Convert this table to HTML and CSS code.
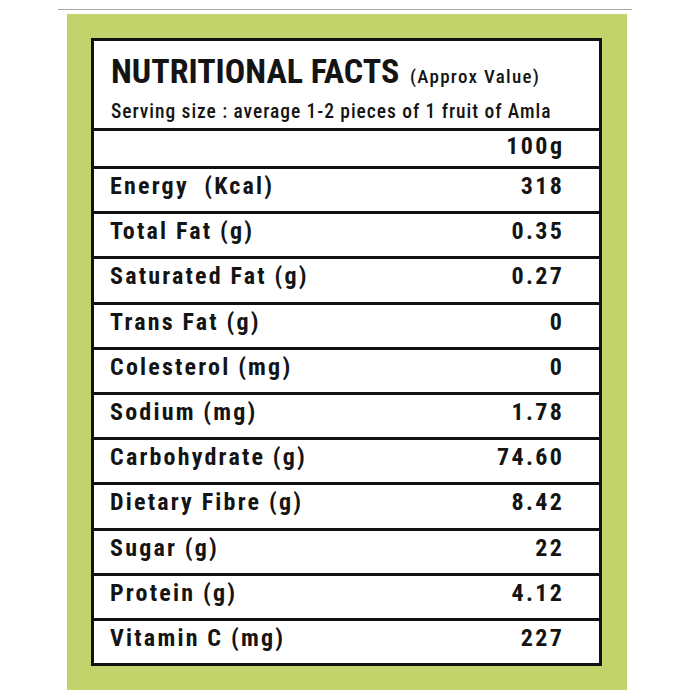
FILE: index.html
```html
<!DOCTYPE html>
<html>
<head>
<meta charset="utf-8">
<link rel="stylesheet" href="styles.css">
</head>
<body>
<div class="page">
  <div class="rule"></div>
  <div class="panel">
    <div class="label-card">
      <div class="head">
        <div class="title"><span class="title-main">NUTRITIONAL FACTS</span> <span class="title-note">(Approx Value)</span></div>
        <div class="serving">Serving size : average 1-2 pieces of 1 fruit of Amla</div>
      </div>
      <div class="row row-unit"><span class="name"></span><span class="val">100g</span></div>
      <div class="row"><span class="name">Energy&nbsp; (Kcal)</span><span class="val">318</span></div>
      <div class="row"><span class="name">Total Fat (g)</span><span class="val">0.35</span></div>
      <div class="row"><span class="name">Saturated Fat (g)</span><span class="val">0.27</span></div>
      <div class="row"><span class="name">Trans Fat (g)</span><span class="val">0</span></div>
      <div class="row"><span class="name">Colesterol (mg)</span><span class="val">0</span></div>
      <div class="row"><span class="name">Sodium (mg)</span><span class="val">1.78</span></div>
      <div class="row"><span class="name">Carbohydrate (g)</span><span class="val">74.60</span></div>
      <div class="row"><span class="name">Dietary Fibre (g)</span><span class="val">8.42</span></div>
      <div class="row"><span class="name">Sugar (g)</span><span class="val">22</span></div>
      <div class="row"><span class="name">Protein (g)</span><span class="val">4.12</span></div>
      <div class="row"><span class="name">Vitamin C (mg)</span><span class="val">227</span></div>
    </div>
  </div>
</div>
</body>
</html>
```

FILE: styles.css
```css
html, body {
  margin: 0;
  padding: 0;
  background: #ffffff;
}

body {
  font-family: Roboto, "Open Sans", sans-serif;
  font-stretch: 75%;
  color: #141414;
}

.page {
  width: 690px;
  height: 700px;
  padding-top: 9px;
  box-sizing: border-box;
}

.rule {
  margin-left: 58px;
  width: 574px;
  height: 1px;
  background: #a9a9a9;
}

.panel {
  margin-top: 4px;
  margin-left: 67px;
  width: 560px;
  height: 676px;
  box-sizing: border-box;
  background: #c3d36b;
  padding: 24px 25px 0 24px;
}

.label-card {
  background: #ffffff;
  border: 3px solid #111111;
  display: flex;
  flex-direction: column;
}

.head {
  height: 87px;
  box-sizing: border-box;
  padding: 13px 0 0 17px;
}

.title {
  line-height: 34px;
  white-space: nowrap;
}

.title-main {
  font-size: 34px;
  font-weight: bold;
}

.title-note {
  font-size: 19px;
  font-weight: 500;
  letter-spacing: 1.3px;
  margin-left: 7px;
}

.serving {
  margin-top: 6px;
  font-size: 19.5px;
  font-weight: 500;
  line-height: 22px;
  letter-spacing: 0.95px;
  white-space: nowrap;
}

.row {
  height: 45.2px;
  box-sizing: border-box;
  border-top: 3px solid #111111;
  display: flex;
  justify-content: space-between;
  align-items: flex-start;
  padding: 5px 37px 0 16px;
  font-size: 24px;
  line-height: 24px;
  font-weight: bold;
  letter-spacing: 2.2px;
}

.row-unit {
  height: 38px;
  padding-top: 3px;
}

.val {
  letter-spacing: 2.4px;
  margin-right: -2.4px;
}
```
